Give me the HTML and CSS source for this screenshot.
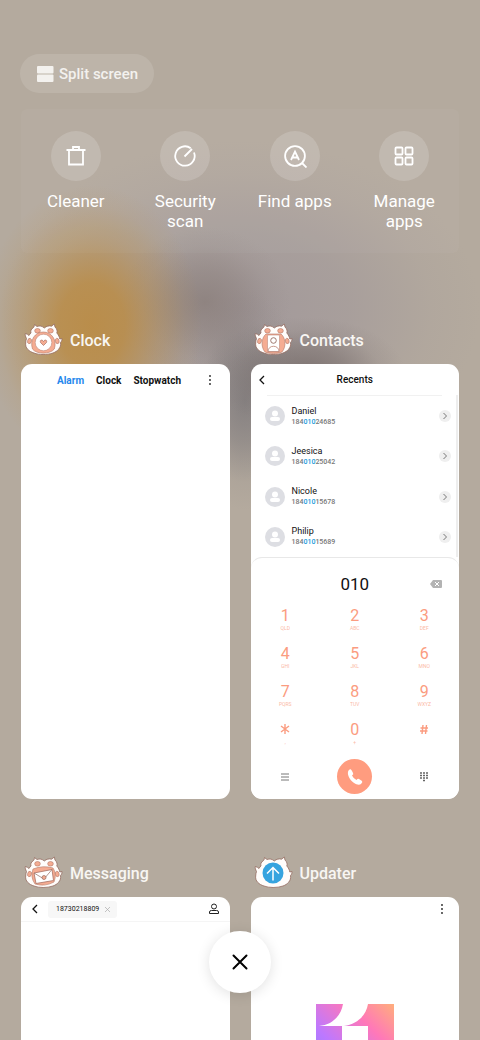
FILE: index.html
```html
<!DOCTYPE html>
<html lang="en">
<head>
    <meta charset="UTF-8">
    <meta name="viewport" content="width=device-width, initial-scale=1.0">
    <title>Recent apps</title>
    <link rel="stylesheet" href="styles.css">
</head>
<body>

    <!-- shared paw shape for the app icons -->
    <svg class="defs" aria-hidden="true">
        <symbol id="paw" viewBox="0 0 40 34">
            <path d="M3.500 15.500C2.500 13.500 2 12 2.300 10.500C4 11 5 11.500 6 12.500Q7 10.500 8 10C7.500 8 8 6 10 5C11 4.200 11.300 3.500 11.500 1.500L14 3.500C17 2.500 19 3 21.300 5C23.500 3 26 2.500 28.500 3.200L31.300 1L32 4C34 6 34.500 8 33.800 10C35.500 12 36.500 14 36.800 16L39 15.500C39 17.500 38.500 18.500 37.500 19.500C38.500 25 34 28.500 30 30C24 32 16 32 11 30C6 28.500 2 25 2.700 20Q2.800 17.500 3.500 15.500Z" fill="#fffdfb" stroke="#946b60" stroke-width=".8"/>
        </symbol>
        <symbol id="pads" viewBox="0 0 40 34">
            <g fill="#f5ac92" stroke="#b27a6a" stroke-width=".6">
                <ellipse cx="14.500" cy="7.800" rx="2.800" ry="2.300"/>
                <ellipse cx="27.500" cy="7.800" rx="2.800" ry="2.300"/>
                <ellipse cx="6.500" cy="18" rx="1.900" ry="2.700" transform="rotate(15 6.500 18)"/>
                <ellipse cx="34.200" cy="18" rx="1.900" ry="2.700" transform="rotate(-15 34.200 18)"/>
            </g>
        </symbol>
    </svg>

    <main class="page">
        <button class="split">
            <svg width="18" height="18" viewBox="0 0 18 18" fill="currentColor">
                <rect x="1" y="1" width="16.500" height="7.500" rx="1"/>
                <rect x="1" y="9.500" width="16.500" height="7.500" rx="1"/>
            </svg>
            Split screen
        </button>

        <nav class="shortcuts">
            <button class="shortcut">
                <span class="circle">
                    <svg width="24" height="24" viewBox="0 0 24 24">
                        <path d="M2.500 6h19M5 6v14.500h14V6M9 5.500V3h6v2.500"/>
                    </svg>
                </span>
                <span>Cleaner</span>
            </button>
            <button class="shortcut">
                <span class="circle">
                    <svg width="24" height="24" viewBox="0 0 24 24">
                        <path d="M21 8.500A9.700 9.700 0 1 1 17.700 4.200M11.500 12.500L19 5"/>
                    </svg>
                </span>
                <span>Security scan</span>
            </button>
            <button class="shortcut">
                <span class="circle">
                    <svg width="24" height="24" viewBox="0 0 24 24">
                        <circle cx="12" cy="12" r="9.900"/>
                        <path d="M19 19l4.500 4.500M8 16l4-8.500 4 8.500M9.500 13.500h5"/>
                    </svg>
                </span>
                <span>Find apps</span>
            </button>
            <button class="shortcut">
                <span class="circle">
                    <svg width="24" height="24" viewBox="0 0 24 24">
                        <rect x="3.500" y="3.500" width="7" height="7" rx="1"/>
                        <rect x="13.500" y="3.500" width="7" height="7" rx="1"/>
                        <rect x="3.500" y="13.500" width="7" height="7" rx="1"/>
                        <rect x="13.500" y="13.500" width="7" height="7" rx="1"/>
                    </svg>
                </span>
                <span>Manage apps</span>
            </button>
        </nav>

        <div class="apps">
            <section class="app">
                <h2>
                    <svg width="40" height="34" viewBox="0 0 40 34">
                        <use href="#paw"/><use href="#pads"/>
                        <path d="M9.500 26C6.500 17 12 9 20.300 9s14 8 11 17c-4 5.500-18 5.500-21.800 0Z" fill="#f5ac92" stroke="#b27a6a" stroke-width=".6"/>
                        <circle cx="20.500" cy="19.500" r="8.300" fill="#fff" stroke="#c08c7c" stroke-width=".6"/>
                        <path d="M20.500 22.500l-3-3c-1-3 2-3 3-1 1-2 4-2 3 1Z" fill="#f5ac92" stroke="#a77164" stroke-width=".7"/>
                    </svg>
                    Clock
                </h2>
                <div class="card">
                    <div class="clock-bar">
                        <div class="tabs">
                            <button class="active">Alarm</button>
                            <button>Clock</button>
                            <button>Stopwatch</button>
                        </div>
                        <button class="more" aria-label="More">
                            <svg width="4" height="12" viewBox="0 0 4 12" fill="#222">
                                <circle cx="2" cy="2" r=".9"/><circle cx="2" cy="6" r=".9"/><circle cx="2" cy="10" r=".9"/>
                            </svg>
                        </button>
                    </div>
                </div>
            </section>

            <section class="app">
                <h2>
                    <svg width="40" height="34" viewBox="0 0 40 34">
                        <use href="#paw"/><use href="#pads"/>
                        <path d="M12 29C7 23 9 14 13 11h15c4 3 6 12 1 18-5 2-12 2-17 0Z" fill="#f5ac92" stroke="#b27a6a" stroke-width=".6"/>
                        <rect x="14.500" y="12" width="12" height="17" rx="1" fill="#fff" stroke="#c08c7c" stroke-width=".6"/>
                        <circle cx="20.500" cy="17.500" r="2.800" fill="#fff" stroke="#946b60" stroke-width=".9"/>
                        <path d="M15 28.500c0-7 11-7 11 0Z" fill="#fff" stroke="#b98172" stroke-width=".8"/>
                    </svg>
                    Contacts
                </h2>
                <div class="card contacts">
                    <header class="contacts-bar">
                        <button class="back" aria-label="Back">
                            <svg width="6" height="10" viewBox="0 0 6 10"><path d="M5 1L1 5l4 4"/></svg>
                        </button>
                        <h3>Recents</h3>
                    </header>
                    <ul class="recents" id="recents"></ul>
                    <div class="dialer">
                        <div class="number">
                            <output>010</output>
                            <button aria-label="Delete">
                                <svg width="12" height="8" viewBox="0 0 12 8">
                                    <path d="M3 0h8q1 0 1 1v6q0 1-1 1H3L0 4Z" fill="#b3b3b3"/>
                                    <path d="M5 2l4 4M9 2L5 6" stroke="#fff"/>
                                </svg>
                            </button>
                        </div>
                        <div class="keys" id="keys"></div>
                        <div class="dial-actions">
                            <button aria-label="Menu">
                                <svg width="8" height="8" viewBox="0 0 8 8"><path d="M0 1h8M0 4h8M0 7h8" stroke="#777"/></svg>
                            </button>
                            <button class="call" aria-label="Call">
                                <svg width="18" height="18" viewBox="0 0 18 18">
                                    <path d="M3 2C4 1 5 1 6 3L7 5Q8 6 6 7.500Q7 10 10.500 12Q12 10 13 11L16 13Q17 14 15 16C12 18 7 15 4 11 2 8 1 4 3 2Z" fill="#fff"/>
                                </svg>
                            </button>
                            <button aria-label="Keypad">
                                <svg width="8" height="10" viewBox="0 0 8 10">
                                    <path d="M0 1h8M0 3.500h8M0 6h8" stroke="#666" stroke-width="1.500" stroke-dasharray="2 1"/>
                                    <path d="M3 8.500h2" stroke="#666" stroke-width="1.500"/>
                                </svg>
                            </button>
                        </div>
                    </div>
                </div>
            </section>

            <section class="app">
                <h2>
                    <svg width="40" height="34" viewBox="0 0 40 34">
                        <use href="#paw"/><use href="#pads"/>
                        <path d="M10 13Q20 9 30 12 34 18 31 26 22 31 12 28 7 21 10 13Z" fill="#f5ac92" stroke="#b27a6a" stroke-width=".6"/>
                        <path d="M11 17l18-3.500 1.500 11L13 27.500Z" fill="#fff" stroke="#a77164" stroke-width=".8"/>
                        <path d="M11 17l10 6 8-9.500" fill="none" stroke="#946b60" stroke-width=".7"/>
                        <circle cx="21" cy="21.500" r="2" fill="#f5ac92" stroke="#946b60" stroke-width=".7"/>
                    </svg>
                    Messaging
                </h2>
                <div class="card">
                    <header class="message-bar">
                        <button class="back" aria-label="Back">
                            <svg width="6" height="10" viewBox="0 0 6 10"><path d="M5 1L1 5l4 4"/></svg>
                        </button>
                        <span class="chip">18730218809
                            <button aria-label="Remove"><svg width="5" height="5" viewBox="0 0 5 5"><path d="M0 0l5 5M5 0L0 5" stroke="#aaa" stroke-width=".7"/></svg></button>
                        </span>
                        <button class="person" aria-label="Contacts">
                            <svg width="12" height="12" viewBox="0 0 12 12" fill="none" stroke="#222">
                                <circle cx="6" cy="3.500" r="2.500"/>
                                <path d="M1.500 10.500V9q0-1.500 2-1.500h5q2 0 2 1.500v1.500Z"/>
                            </svg>
                        </button>
                    </header>
                </div>
            </section>

            <section class="app">
                <h2>
                    <svg width="40" height="34" viewBox="0 0 40 34">
                        <use href="#paw"/>
                        <circle cx="20" cy="17" r="10.500" fill="#37a4df"/>
                        <path d="M20 24.500V11.500M14 17.500l6-6 6 6" fill="none" stroke="#fff" stroke-width="1.500"/>
                    </svg>
                    Updater
                </h2>
                <div class="card updater">
                    <button class="more" aria-label="More">
                        <svg width="4" height="12" viewBox="0 0 4 12" fill="#222">
                            <circle cx="2" cy="2" r=".9"/><circle cx="2" cy="6" r=".9"/><circle cx="2" cy="10" r=".9"/>
                        </svg>
                    </button>
                    <svg class="brand" width="78" height="78" viewBox="0 0 78 78">
                        <defs>
                            <linearGradient id="brandFill" x1="0" y1="1" x2="1" y2="0">
                                <stop offset="0" stop-color="#7f86ff"/>
                                <stop offset=".35" stop-color="#bd78ff"/>
                                <stop offset=".7" stop-color="#ff78b8"/>
                                <stop offset="1" stop-color="#ffae7c"/>
                            </linearGradient>
                        </defs>
                        <path d="M0 0H27C25 12 16 21 3 22H26V78H0ZM52 0H78V78H52V22H28C41 20 50 12 52 0Z" fill="url(#brandFill)"/>
                    </svg>
                </div>
            </section>
        </div>
    </main>

    <button class="close-all" aria-label="Close all">
        <svg width="16" height="16" viewBox="0 0 16 16"><path d="M1.500 1.500l13 13M14.500 1.500l-13 13"/></svg>
    </button>

    <script>
        const contacts = [
            { name: "Daniel", end: "24685" },
            { name: "Jeesica", end: "25042" },
            { name: "Nicole", end: "15678" },
            { name: "Philip", end: "15689" }
        ];

        const keys = [
            ["1", "QLD"], ["2", "ABC"], ["3", "DEF"],
            ["4", "GHI"], ["5", "JKL"], ["6", "MNO"],
            ["7", "PQRS"], ["8", "TUV"], ["9", "WXYZ"],
            ["*", ","], ["0", "+"], ["#", ""]
        ];

        const symbols = {
            "*": '<svg width="10" height="10" viewBox="0 0 10 10"><path d="M5 0v10M1 2l8 6M9 2L1 8"/></svg>',
            "#": '<svg width="8" height="9" viewBox="0 0 8 9"><path d="M3 0L2 9M6.500 0l-1 9M.5 3H8M0 6h7.500"/></svg>'
        };

        document.getElementById('recents').innerHTML = contacts.map(contact => `
            <li>
                <svg class="avatar" width="20" height="20" viewBox="0 0 20 20">
                    <circle cx="10" cy="10" r="10" fill="#dddee3"/>
                    <circle cx="10" cy="7.500" r="3" fill="#fff"/>
                    <rect x="5" y="11" width="10" height="4" rx="2" fill="#fff"/>
                </svg>
                <div class="who">
                    <strong>${contact.name}</strong>
                    <span>184<mark>010</mark>${contact.end}</span>
                </div>
                <button class="info" aria-label="Details">
                    <svg width="4" height="6" viewBox="0 0 4 6"><path d="M.5 0l3 3-3 3" fill="none" stroke="#777"/></svg>
                </button>
            </li>
        `).join('');

        document.getElementById('keys').innerHTML = keys.map(([key, letters]) => `
            <button aria-label="${key}">
                <span class="digit">${symbols[key] || key}</span>
                <small>${letters}</small>
            </button>
        `).join('');
    </script>
</body>
</html>
```

FILE: styles.css
```css
* {
    box-sizing: border-box;
}
body {
    margin: 0;
    height: 100vh;
    overflow: hidden;
    font-family: Roboto, sans-serif;
    color: #fff;
    background:
        radial-gradient(ellipse 110px 140px at 92px 325px, rgba(187, 139, 66, 0.9), rgba(187, 139, 66, 0.82) 30%, rgba(187, 139, 66, 0.4) 60%, rgba(187, 139, 66, 0.1) 85%, rgba(187, 139, 66, 0) 100%),
        radial-gradient(ellipse 85px 75px at 205px 302px, rgba(136, 124, 120, 0.75), rgba(136, 124, 120, 0.45) 40%, rgba(136, 124, 120, 0.12) 75%, rgba(136, 124, 120, 0) 100%),
        radial-gradient(ellipse 100px 55px at 305px 372px, rgba(116, 106, 104, 0.8), rgba(116, 106, 104, 0.5) 40%, rgba(116, 106, 104, 0.12) 75%, rgba(116, 106, 104, 0) 100%),
        radial-gradient(ellipse 60px 110px at 245px 400px, rgba(125, 121, 122, 0.8), rgba(125, 121, 122, 0.5) 40%, rgba(125, 121, 122, 0.1) 75%, rgba(125, 121, 122, 0) 100%),
        radial-gradient(ellipse 240px 170px at 240px 310px, rgba(160, 151, 154, 0.9), rgba(160, 151, 154, 0.6) 45%, rgba(160, 151, 154, 0.15) 80%, rgba(160, 151, 154, 0) 100%),
        #b4aa9e;
}
h2, h3, ul {
    margin: 0;
    padding: 0;
    font-weight: 500;
}
button {
    margin: 0;
    padding: 0;
    border: none;
    background: none;
    font-family: inherit;
    color: inherit;
    cursor: pointer;
}
svg {
    display: block;
    flex: none;
}
.defs {
    position: absolute;
    width: 0;
    height: 0;
}
.page {
    height: 100%;
    padding: 54px 21px 0;
    overflow: hidden;
}
.split {
    display: flex;
    align-items: center;
    gap: 5px;
    height: 39px;
    padding: 0 16px;
    margin-left: -1px;
    border-radius: 20px;
    background: rgba(255, 255, 255, 0.12);
    font-size: 15px;
    font-weight: 500;
    color: #f3f1ee;
}
.shortcuts {
    display: grid;
    grid-template-columns: repeat(4, 1fr);
    height: 144px;
    margin-top: 16px;
    padding-top: 22px;
    border-radius: 6px;
    background: rgba(255, 255, 255, 0.03);
}
.shortcut {
    display: flex;
    flex-direction: column;
    align-items: center;
    gap: 10px;
    padding: 0 16px;
    font-size: 17px;
    line-height: 20px;
}
.circle {
    display: flex;
    align-items: center;
    justify-content: center;
    width: 50px;
    height: 50px;
    border-radius: 50%;
    background: rgba(255, 255, 255, 0.16);
}
.circle svg {
    fill: none;
    stroke: #fff;
    stroke-width: 1.8;
}
.apps {
    display: grid;
    grid-template-columns: 1fr 1fr;
    gap: 55px 21px;
    margin-top: 68px;
}
.app h2 {
    display: flex;
    align-items: center;
    gap: 7px;
    height: 38px;
    padding-left: 2px;
    margin-bottom: 5px;
    font-size: 16px;
    color: #f8f6f3;
}
.card {
    min-height: 435px;
    border-radius: 11px;
    background: #fff;
    color: #111;
    overflow: hidden;
}
.clock-bar {
    display: flex;
    align-items: center;
    justify-content: space-between;
    height: 32px;
    padding: 0 18px 0 36px;
}
.tabs {
    display: flex;
    gap: 12px;
}
.tabs button {
    font-size: 10px;
    font-weight: 700;
    color: #111;
}
.tabs .active {
    color: #2587ed;
}
.back svg {
    fill: none;
    stroke: #111;
    stroke-width: 1.3;
}
.contacts {
    display: flex;
    flex-direction: column;
}
.contacts-bar {
    display: grid;
    grid-template-columns: 1fr auto 1fr;
    align-items: center;
    height: 31px;
    padding: 0 8px;
}
.contacts-bar h3 {
    font-size: 10px;
}
.recents {
    flex: 1;
    display: flex;
    flex-direction: column;
    list-style: none;
    margin-right: 1px;
    border-right: 2px solid #eee;
}
.recents::before {
    content: '';
    height: 1px;
    margin: 0 14px 0 16px;
    background: #f1f1f1;
}
.recents li {
    flex: 1;
    display: flex;
    align-items: center;
    min-height: 32px;
    padding: 0 5px 0 14px;
}
.who {
    flex: 1;
    padding-left: 7px;
    line-height: 11px;
}
.who strong {
    display: block;
    font-size: 9px;
    font-weight: 400;
}
.who span {
    display: block;
    font-size: 7px;
    line-height: 10px;
    color: #777;
}
.who mark {
    background: none;
    color: #159bdc;
}
.info {
    display: flex;
    align-items: center;
    justify-content: center;
    width: 12px;
    height: 12px;
    border-radius: 50%;
    background: #efefef;
}
.dialer {
    border-top: 1px solid #e8e8e8;
    border-radius: 11px;
    background: #fff;
}
.number {
    display: grid;
    grid-template-columns: 1fr auto 1fr;
    align-items: center;
    height: 44px;
    padding: 8px 17px 0;
}
.number output {
    grid-column: 2;
    font-size: 17px;
}
.number button {
    justify-self: end;
}
.keys {
    display: grid;
    grid-template-columns: repeat(3, 1fr);
    color: #fb9c80;
}
.keys button {
    display: flex;
    flex-direction: column;
    align-items: center;
    height: 38px;
    padding-top: 3px;
}
.digit {
    display: flex;
    align-items: center;
    height: 20px;
    font-size: 16px;
}
.digit svg {
    fill: none;
    stroke: currentColor;
    stroke-width: 1.4;
}
.keys small {
    font-size: 5px;
    line-height: 6px;
    opacity: 0.7;
}
.dial-actions {
    display: grid;
    grid-template-columns: repeat(3, 1fr);
    place-items: center;
    height: 45px;
}
.call {
    display: flex;
    align-items: center;
    justify-content: center;
    width: 35px;
    height: 35px;
    border-radius: 50%;
    background: #ff9c7f;
}
.message-bar {
    display: flex;
    align-items: center;
    height: 25px;
    padding: 0 10px 0 11px;
    border-bottom: 1px solid #f5f5f5;
}
.chip {
    display: flex;
    align-items: center;
    gap: 6px;
    height: 17px;
    margin-left: 10px;
    padding: 0 7px 0 8px;
    border-radius: 3px;
    background: #f7f7f7;
    font-size: 7px;
}
.person {
    margin-left: auto;
}
.updater {
    display: flex;
    flex-direction: column;
    align-items: center;
}
.updater .more {
    align-self: flex-end;
    margin: 6px 15px 0 0;
}
.brand {
    margin-top: 89px;
}
.close-all {
    position: fixed;
    left: 50%;
    bottom: 47px;
    display: flex;
    align-items: center;
    justify-content: center;
    width: 62px;
    height: 62px;
    margin-left: -31px;
    border-radius: 50%;
    background: #fff;
    box-shadow: 0 2px 14px rgba(0, 0, 0, 0.12);
}
.close-all svg {
    fill: none;
    stroke: #000;
    stroke-width: 2;
    stroke-linecap: round;
}
```
